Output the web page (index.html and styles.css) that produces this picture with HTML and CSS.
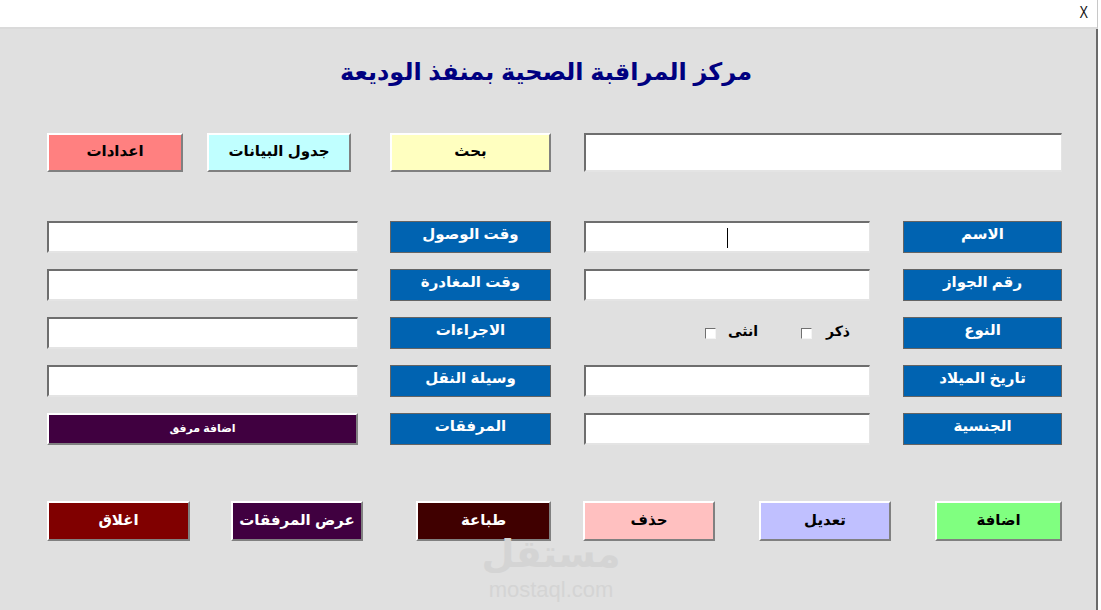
FILE: index.html
```html
<!DOCTYPE html>
<html lang="ar">
<head>
<meta charset="utf-8">
<title>مركز المراقبة الصحية بمنفذ الوديعة</title>
<link rel="stylesheet" href="styles.css">
</head>
<body>
<div class="titlebar"><span class="close">X</span></div>
<div class="window">
  <h1 class="heading">مركز المراقبة الصحية بمنفذ الوديعة</h1>

  <div class="row row-top">
    <div class="btn c-settings w136">اعدادات</div>
    <div class="btn c-table w144 ml24">جدول البيانات</div>
    <div class="btn c-search w161 ml39">بحث</div>
    <div class="field w478 ml33"></div>
  </div>

  <div class="form">
    <div class="row frow">
      <div class="field w311"></div>
      <div class="label w161 ml32">وقت الوصول</div>
      <div class="field w286 ml33"><span class="caret"></span></div>
      <div class="label w159 ml33">الاسم</div>
    </div>
    <div class="row frow">
      <div class="field w311"></div>
      <div class="label w161 ml32">وقت المغادرة</div>
      <div class="field w286 ml33"></div>
      <div class="label w159 ml33">رقم الجواز</div>
    </div>
    <div class="row frow">
      <div class="field w311"></div>
      <div class="label w161 ml32">الاجراءات</div>
      <div class="gender w286 ml33">
        <div class="opt opt-f"><span class="box"></span><span class="opt-text">انثى</span></div>
        <div class="opt opt-m"><span class="box"></span><span class="opt-text">ذكر</span></div>
      </div>
      <div class="label w159 ml33">النوع</div>
    </div>
    <div class="row frow">
      <div class="field w311"></div>
      <div class="label w161 ml32">وسيلة النقل</div>
      <div class="field w286 ml33"></div>
      <div class="label w159 ml33">تاريخ الميلاد</div>
    </div>
    <div class="row frow">
      <div class="btn c-attach w311 small">اضافة مرفق</div>
      <div class="label w161 ml32">المرفقات</div>
      <div class="field w286 ml33"></div>
      <div class="label w159 ml33">الجنسية</div>
    </div>
  </div>

  <div class="row row-bottom">
    <div class="btn c-close w143">اغلاق</div>
    <div class="btn c-attach w132 ml41">عرض المرفقات</div>
    <div class="btn c-print w135 ml53">طباعة</div>
    <div class="btn c-delete w132 ml32">حذف</div>
    <div class="btn c-edit w132 ml44">تعديل</div>
    <div class="btn c-add w127 ml44">اضافة</div>
  </div>

  <div class="watermark">
    <div class="wm-ar">مستقل</div>
    <div class="wm-en">mostaql.com</div>
  </div>
</div>
</body>
</html>
```

FILE: styles.css
```css
html, body {
  margin: 0;
  padding: 0;
}
body {
  width: 1101px;
  height: 610px;
  overflow: hidden;
  background: #ffffff;
  font-family: "Liberation Sans", "DejaVu Sans", sans-serif;
}
.titlebar {
  height: 27px;
  background: #ffffff;
  border-bottom: 2px solid #dadada;
  border-right: 1px solid #c8c8c8;
  width: 1097px;
  display: flex;
  justify-content: flex-end;
  align-items: center;
}
.close {
  font-family: "Liberation Sans", sans-serif;
  font-size: 17px;
  line-height: 17px;
  font-weight: normal;
  transform: scaleX(0.75);
  color: #111;
  margin-right: 8px;
  margin-top: -3px;
}
.window {
  position: relative;
  width: 1096px;
  height: 581px;
  background: #e0e0e0;
  border-right: 2px solid #6a6a6a;
  padding-left: 0;
}
.heading {
  margin: 0;
  padding-top: 23px;
  height: 40px;
  line-height: 40px;
  text-align: center;
  font-size: 24px;
  font-weight: bold;
  color: #000080;
  padding-right: 4px;
}
.row {
  display: flex;
  align-items: stretch;
  padding-left: 47px;
}
.row-top {
  margin-top: 41px;
  height: 39px;
}
.form {
  margin-top: 49px;
  display: flex;
  flex-direction: column;
  gap: 16px;
}
.frow {
  height: 32px;
}
.row-bottom {
  margin-top: 56px;
  height: 40px;
}

.w127 { width: 127px; }
.w132 { width: 132px; }
.w135 { width: 135px; }
.w136 { width: 136px; }
.w143 { width: 143px; }
.w144 { width: 144px; }
.w159 { width: 159px; }
.w161 { width: 161px; }
.w286 { width: 286px; }
.w311 { width: 311px; }
.w478 { width: 478px; }
.ml24 { margin-left: 24px; }
.ml32 { margin-left: 32px; }
.ml33 { margin-left: 33px; }
.ml39 { margin-left: 39px; }
.ml41 { margin-left: 41px; }
.ml44 { margin-left: 44px; }
.ml53 { margin-left: 53px; }

.btn, .label, .field, .gender {
  box-sizing: border-box;
}
.btn {
  display: flex;
  align-items: center;
  justify-content: center;
  font-weight: bold;
  font-size: 15px;
  color: #000;
  border-top: 2px solid #ffffff;
  border-left: 2px solid #ffffff;
  border-right: 2px solid #808080;
  border-bottom: 2px solid #808080;
  padding-bottom: 3px;
}
.btn.small {
  font-size: 11px;
  padding-bottom: 2px;
}
.c-settings { background: #ff8080; }
.c-table { background: #c0ffff; }
.c-search { background: #ffffc0; }
.c-attach { background: #400040; color: #ffffff; }
.c-close { background: #800000; color: #ffffff; }
.c-print { background: #400000; color: #ffffff; }
.c-delete { background: #ffc0c0; }
.c-edit { background: #c0c0ff; }
.c-add { background: #80ff80; }

.label {
  background: #0063b1;
  border: 1px solid #646464;
  color: #ffffff;
  font-weight: bold;
  font-size: 15px;
  display: flex;
  align-items: center;
  justify-content: center;
  padding-bottom: 6px;
}
.field {
  background: #ffffff;
  border-top: 2px solid #6e6e6e;
  border-left: 2px solid #6e6e6e;
  border-right: 1px solid #e4e4e4;
  border-bottom: 2px solid #e4e4e4;
  display: flex;
  align-items: center;
}
.caret {
  width: 1px;
  height: 20px;
  background: #000;
  margin-left: 141px;
  margin-top: 1px;
}
.gender {
  display: flex;
  align-items: center;
  padding-left: 121px;
}
.opt {
  display: flex;
  align-items: center;
  justify-content: space-between;
  font-weight: bold;
  font-size: 14px;
  color: #000;
}
.opt-f { width: 53px; }
.opt-m { width: 49px; margin-left: 43px; }
.opt-text { padding-bottom: 4px; }
.box {
  width: 11px;
  height: 11px;
  box-sizing: border-box;
  background: #ffffff;
  border-top: 1px solid #707070;
  border-left: 1px solid #707070;
  border-right: 1px solid #f4f4f4;
  border-bottom: 1px solid #f4f4f4;
}

.watermark {
  position: absolute;
  left: 478px;
  top: 506px;
  width: 146px;
  display: flex;
  flex-direction: column;
  align-items: center;
  color: #d4d4d4;
  pointer-events: none;
}
.wm-ar {
  font-family: "DejaVu Sans", sans-serif;
  font-weight: bold;
  font-size: 38px;
  line-height: 38px;
  height: 38px;
}
.wm-en {
  font-family: "Liberation Sans", sans-serif;
  font-size: 22px;
  line-height: 20px;
  margin-top: 7px;
}
```
